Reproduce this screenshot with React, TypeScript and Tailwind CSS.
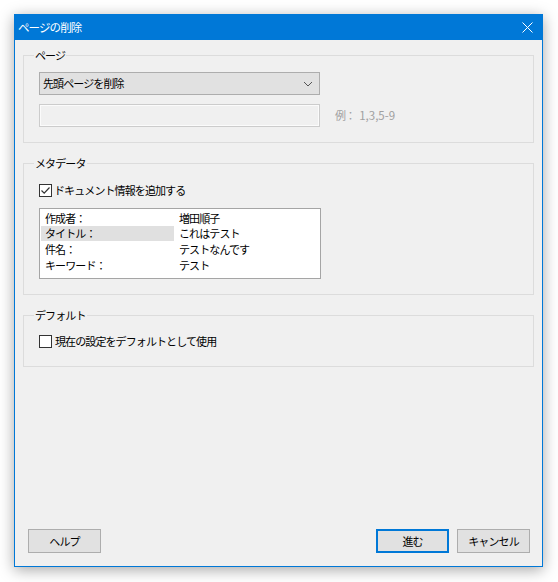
import React from "react";

const font = { fontFamily: '"Noto Sans CJK JP", "Noto Sans", sans-serif' };

function Checkbox({ checked }: { checked: boolean }) {
  return (
    <div className="w-[13px] h-[13px] border border-[#333333] bg-white flex items-center justify-center shrink-0">
      {checked && (
        <svg width="11" height="11" viewBox="0 0 11 11">
          <path d="M1.5 5.5 L4.2 8.2 L9.5 2.5" fill="none" stroke="#333333" strokeWidth="1.2" />
        </svg>
      )}
    </div>
  );
}

function Group({ title, className, children }: { title: string; className: string; children: React.ReactNode }) {
  return (
    <div className={"relative mx-[8px] border border-[#dcdcdc] " + className}>
      <span className="absolute left-[10px] top-[-9px] bg-[#f0f0f0] px-[1px] leading-[16px]">{title}</span>
      {children}
    </div>
  );
}

export default function App() {
  const rows = [
    ["作成者：", "増田順子"],
    ["タイトル：", "これはテスト"],
    ["件名：", "テストなんです"],
    ["キーワード：", "テスト"],
  ];
  return (
    <div
      className="w-[558px] h-[582px] bg-white pl-[14px] pt-[14px] text-[11px] tracking-[-0.9px] text-black"
      style={font}
    >
      <div className="w-[529px] h-[553px] border border-[#0078d7] bg-[#f0f0f0] flex flex-col shadow-[0_3px_14px_rgba(0,0,0,0.35)]">
        <div className="h-[25px] bg-[#0078d7] flex items-center justify-between pl-[3px] pr-[9px] text-white text-[11.5px]">
          <span>ページの削除</span>
          <svg width="11" height="11" viewBox="0 0 11 11">
            <path d="M0.5 0.5 L10.5 10.5 M10.5 0.5 L0.5 10.5" stroke="white" strokeWidth="1" />
          </svg>
        </div>
        <div className="flex-1 flex flex-col pt-[15px]">
          <Group title="ページ" className="h-[88px] pl-[15px] pt-[16px]">
            <div className="w-[281px] h-[23px] bg-[#e1e1e1] border border-[#adadad] flex items-center justify-between pl-[3px] pr-[6px]">
              <span>先頭ページを削除</span>
              <svg width="10" height="6" viewBox="0 0 10 6">
                <path d="M1 1 L5 5 L9 1" fill="none" stroke="#555555" strokeWidth="1" />
              </svg>
            </div>
            <div className="flex items-center mt-[9px]">
              <div className="w-[281px] h-[23px] border border-[#cccccc] bg-[#f0f0f0] shadow-[inset_0_0_0_1px_#fbfbfb]" />
              <span className="ml-[15px] text-[#a0a0a0]">
                例：<span className="ml-[4px] tracking-normal text-[11.5px]">1,3,5-9</span>
              </span>
            </div>
          </Group>
          <Group title="メタデータ" className="h-[132px] mt-[20px] pl-[15px] pt-[20px]">
            <div className="flex items-center h-[13px]">
              <Checkbox checked />
              <span className="ml-[2px]">ドキュメント情報を追加する</span>
            </div>
            <div className="mt-[11px] w-[282px] h-[71px] border border-[#a5a5a5] bg-white pt-[1px] pl-[1px]">
              {rows.map((r, i) => (
                <div key={i} className="flex h-[15.7px] items-center">
                  <div className={"w-[133px] h-full flex items-center pl-[4px] " + (i === 1 ? "bg-[#e0e0e0]" : "")}>{r[0]}</div>
                  <div className="pl-[5px]">{r[1]}</div>
                </div>
              ))}
            </div>
          </Group>
          <Group title="デフォルト" className="h-[52px] mt-[20px] pl-[15px] pt-[19px]">
            <div className="flex items-center h-[13px]">
              <Checkbox checked={false} />
              <span className="ml-[3px]">現在の設定をデフォルトとして使用</span>
            </div>
          </Group>
          <div className="mt-auto flex items-center pl-[13px] pr-[12px] pb-[13px]">
            <button className="w-[73px] h-[24px] bg-[#e1e1e1] border border-[#adadad] flex items-center justify-center">ヘルプ</button>
            <div className="flex-1" />
            <button className="w-[73px] h-[24px] bg-[#e1e1e1] border-2 border-[#0078d7] flex items-center justify-center">進む</button>
            <button className="ml-[8px] w-[73px] h-[24px] bg-[#e1e1e1] border border-[#adadad] flex items-center justify-center">キャンセル</button>
          </div>
        </div>
      </div>
    </div>
  );
}
